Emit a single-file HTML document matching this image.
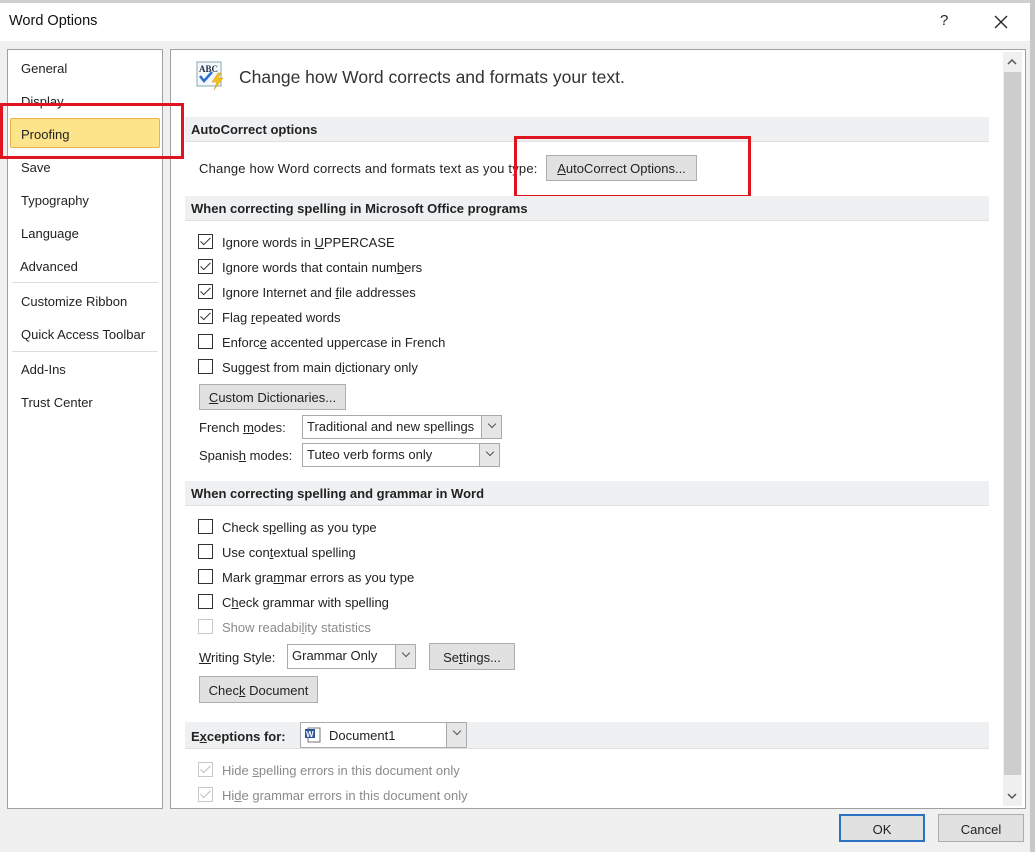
<!DOCTYPE html>
<html><head><style>
*{margin:0;padding:0;box-sizing:border-box}
body{width:1035px;height:852px;background:#f0f0f0;font-family:"Liberation Sans",sans-serif;font-size:13px;color:#222;position:relative;overflow:hidden}
.a{position:absolute;white-space:nowrap}
.btn{position:absolute;background:#e1e1e1;border:1px solid #adadad;text-align:center}
.cb{position:absolute;width:15px;height:15px;border:1px solid #333;background:#fff}
.cb.on::after{content:"";position:absolute;left:4px;top:0px;width:4px;height:9px;border:solid #333;border-width:0 1.5px 1.5px 0;transform:rotate(45deg)}
.cb.dis{border-color:#c8c8c8}
.cb.dis::after{border-color:#bbb}
.hdr{position:absolute;left:185px;width:804px;height:25px;background:#eef0f2;font-weight:bold;padding:5px 6px;border-bottom:1px solid #e0e0e0}
.sel{position:absolute;background:#fff;border:1px solid #aaa;padding:3px 4px}
.sel .dd{position:absolute;right:0;top:0;bottom:0;width:20px;background:#e6e6e6;border-left:1px solid #aaa}
.sel .dd::after{content:"";position:absolute;left:7px;top:5px;width:5px;height:5px;border:solid #555;border-width:0 1px 1px 0;transform:rotate(45deg)}
.nav{position:absolute;left:21px}
.red{position:absolute;border:3px solid #e0141e}
u{text-decoration:underline}
</style></head><body>
<div class="a" style="left:0;top:0;width:1035px;height:3px;background:#d0d0d0"></div>
<div class="a" style="left:0;top:3px;width:1030px;height:38px;background:#fff"></div>
<div class="a" style="left:1030px;top:0;width:5px;height:852px;background:#c8c8c8"></div>
<div class="a" style="left:9px;top:13px;font-size:14.5px;color:#111">Word Options</div>
<div class="a" style="left:940px;top:12px;font-size:15px">?</div>
<svg class="a" style="left:994px;top:15px" width="14" height="14"><path d="M1 1L13 13M13 1L1 13" stroke="#222" stroke-width="1.3"/></svg>

<div class="a" style="left:7px;top:49px;width:156px;height:760px;background:#fff;border:1px solid #a0a0a0"></div>
<div class="nav a" style="top:61px">General</div>
<div class="nav a" style="top:94px">Display</div>
<div class="a" style="left:10px;top:118px;width:150px;height:30px;background:#fde38a;border:1px solid #e8b14a;border-radius:2px"></div>
<div class="nav a" style="top:127px">Proofing</div>
<div class="nav a" style="top:160px">Save</div>
<div class="nav a" style="top:193px">Typography</div>
<div class="nav a" style="top:226px">Language</div>
<div class="nav a" style="top:259px;left:20px">Advanced</div>
<div class="a" style="left:12px;top:282px;width:146px;height:1px;background:#ddd"></div>
<div class="nav a" style="top:294px">Customize Ribbon</div>
<div class="nav a" style="top:327px">Quick Access Toolbar</div>
<div class="a" style="left:12px;top:351px;width:146px;height:1px;background:#ddd"></div>
<div class="nav a" style="top:362px">Add-Ins</div>
<div class="nav a" style="top:395px">Trust Center</div>

<div class="a" style="left:170px;top:49px;width:856px;height:760px;background:#fff;border:1px solid #a0a0a0"></div>
<div class="red" style="left:0;top:103px;width:184px;height:56px"></div>
<div class="a" style="left:1003px;top:52px;width:19px;height:754px;background:#f0f0f0"></div>
<div class="a" style="left:1004px;top:72px;width:17px;height:703px;background:#cdcdcd"></div>
<svg class="a" style="left:1007px;top:58px" width="10" height="8"><path d="M1 6L5 2L9 6" stroke="#555" stroke-width="1.5" fill="none"/></svg>
<svg class="a" style="left:1007px;top:792px" width="10" height="8"><path d="M1 2L5 6L9 2" stroke="#555" stroke-width="1.5" fill="none"/></svg>

<svg class="a" style="left:196px;top:61px" width="32" height="30"><rect x="1" y="1" width="24" height="24" fill="#f4f7fb" stroke="#8aa"/><text x="3" y="11" font-size="9" font-family="Liberation Serif" font-weight="bold" fill="#234">ABC</text><path d="M4 15L8 20L16 11" stroke="#2a6fd0" stroke-width="2.5" fill="none"/><path d="M22 12L16 21H21L18 29L27 17H22L25 12Z" fill="#f5c020" stroke="#c90" stroke-width=".5"/></svg>
<div class="a" style="left:239px;top:67px;font-size:17.5px;color:#333">Change how Word corrects and formats your text.</div>

<div class="hdr" style="top:117px">AutoCorrect options</div>
<div class="a" style="left:199px;top:161px;letter-spacing:0.2px">Change how Word corrects and formats text as you type:</div>
<div class="btn" style="left:546px;top:155px;width:151px;height:26px;padding-top:5px"><u>A</u>utoCorrect Options...</div>
<div class="red" style="left:514px;top:136px;width:237px;height:62px"></div>

<div class="hdr" style="top:196px">When correcting spelling in Microsoft Office programs</div>
<div class="cb on" style="left:198px;top:234px"></div><div class="a" style="left:222px;top:235px">Ignore words in <u>U</u>PPERCASE</div>
<div class="cb on" style="left:198px;top:259px"></div><div class="a" style="left:222px;top:260px">Ignore words that contain num<u>b</u>ers</div>
<div class="cb on" style="left:198px;top:284px"></div><div class="a" style="left:222px;top:285px">Ignore Internet and <u>f</u>ile addresses</div>
<div class="cb on" style="left:198px;top:309px"></div><div class="a" style="left:222px;top:310px">Flag <u>r</u>epeated words</div>
<div class="cb" style="left:198px;top:334px"></div><div class="a" style="left:222px;top:335px">Enforc<u>e</u> accented uppercase in French</div>
<div class="cb" style="left:198px;top:359px"></div><div class="a" style="left:222px;top:360px">Suggest from main d<u>i</u>ctionary only</div>
<div class="btn" style="left:199px;top:384px;width:147px;height:26px;padding-top:5px"><u>C</u>ustom Dictionaries...</div>
<div class="a" style="left:199px;top:420px">French <u>m</u>odes:</div>
<div class="sel" style="left:302px;top:415px;width:200px;height:24px">Traditional and new spellings<div class="dd"></div></div>
<div class="a" style="left:199px;top:448px">Spanis<u>h</u> modes:</div>
<div class="sel" style="left:302px;top:443px;width:198px;height:24px">Tuteo verb forms only<div class="dd"></div></div>

<div class="hdr" style="top:481px">When correcting spelling and grammar in Word</div>
<div class="cb" style="left:198px;top:519px"></div><div class="a" style="left:222px;top:520px">Check s<u>p</u>elling as you type</div>
<div class="cb" style="left:198px;top:544px"></div><div class="a" style="left:222px;top:545px">Use con<u>t</u>extual spelling</div>
<div class="cb" style="left:198px;top:569px"></div><div class="a" style="left:222px;top:570px">Mark gra<u>m</u>mar errors as you type</div>
<div class="cb" style="left:198px;top:594px"></div><div class="a" style="left:222px;top:595px">C<u>h</u>eck grammar with spelling</div>
<div class="cb dis" style="left:198px;top:619px"></div><div class="a" style="left:222px;top:620px;color:#8a8a8a">Show readabi<u>l</u>ity statistics</div>
<div class="a" style="left:199px;top:650px"><u>W</u>riting Style:</div>
<div class="sel" style="left:287px;top:644px;width:129px;height:25px">Grammar Only<div class="dd"></div></div>
<div class="btn" style="left:429px;top:643px;width:86px;height:27px;padding-top:6px">Se<u>t</u>tings...</div>
<div class="btn" style="left:199px;top:676px;width:119px;height:27px;padding-top:6px">Chec<u>k</u> Document</div>

<div class="hdr" style="top:722px;height:27px;padding-top:7px">E<u>x</u>ceptions for:</div>
<div class="sel" style="left:300px;top:722px;width:167px;height:26px;padding-left:28px;padding-top:5px">Document1<div class="dd"></div></div>
<svg class="a" style="left:305px;top:727px" width="16" height="16"><rect x="3" y="1" width="12" height="14" fill="#fff" stroke="#777"/><rect x="0" y="2" width="10" height="9" fill="#2b579a"/><text x="1" y="10" font-size="8" fill="#fff" font-weight="bold">W</text></svg>
<div class="cb on dis" style="left:198px;top:762px"></div><div class="a" style="left:222px;top:763px;color:#8a8a8a">Hide <u>s</u>pelling errors in this document only</div>
<div class="cb on dis" style="left:198px;top:787px"></div><div class="a" style="left:222px;top:788px;color:#8a8a8a">Hi<u>d</u>e grammar errors in this document only</div>

<div class="btn" style="left:839px;top:814px;width:86px;height:28px;border:2px solid #2a72c4;padding-top:6px">OK</div>
<div class="btn" style="left:938px;top:814px;width:86px;height:28px;padding-top:7px">Cancel</div>
</body></html>
